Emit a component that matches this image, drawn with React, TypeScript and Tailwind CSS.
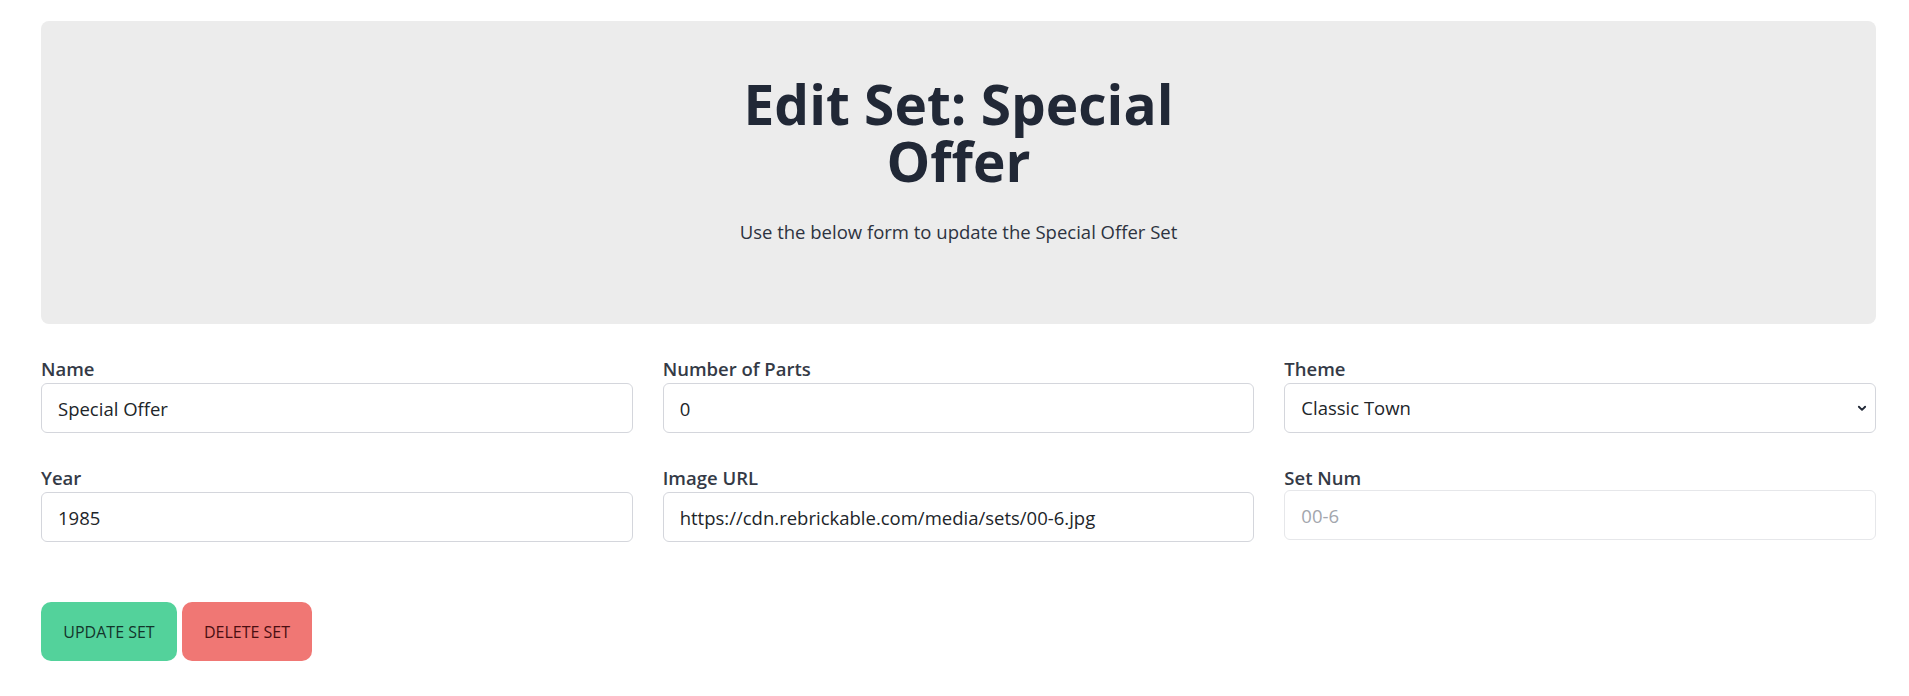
import React, { useState } from 'react';

const font = { fontFamily: '"Open Sans", "Noto Sans", sans-serif' };

interface FieldProps {
  label: string;
  children: React.ReactNode;
}

const Field: React.FC<FieldProps> = ({ label, children }) => (
  <div className="flex flex-col">
    <label className="text-[18.5px] leading-[28px] font-semibold text-[#343a46]">{label}</label>
    {children}
  </div>
);

const inputCls =
  'h-[50px] w-full rounded-md border border-[#d4d6dc] bg-white px-4 text-[18.5px] text-[#212529] outline-none';

export default function App() {
  const [name, setName] = useState('Special Offer');
  const [parts, setParts] = useState('0');
  const [theme, setTheme] = useState('Classic Town');
  const [year, setYear] = useState('1985');
  const [img, setImg] = useState('https://cdn.rebrickable.com/media/sets/00-6.jpg');

  return (
    <div className="min-h-screen bg-white pl-[41px] pr-[33px] pt-[21px]" style={font}>
      {/* header */}
      <div className="flex h-[303px] flex-col items-center rounded-lg bg-[#ececec] pt-[54px]">
        <h1 className="w-[520px] text-center text-[55px] font-bold leading-[57px] text-[#212836]">
          Edit Set: Special Offer
        </h1>
        <p className="mt-[29px] text-[18.5px] leading-[28px] text-[#2d3340]">
          Use the below form to update the Special Offer Set
        </p>
      </div>

      {/* form */}
      <div className="mt-[31px] grid grid-cols-3 gap-x-[30px] gap-y-[31px]">
        <Field label="Name">
          <input className={inputCls} value={name} onChange={e => setName(e.target.value)} />
        </Field>
        <Field label="Number of Parts">
          <input className={inputCls} value={parts} onChange={e => setParts(e.target.value)} />
        </Field>
        <Field label="Theme">
          <div className="relative">
            <select
              className={`${inputCls} appearance-none`}
              value={theme}
              onChange={e => setTheme(e.target.value)}
            >
              <option>Classic Town</option>
              <option>Classic Space</option>
              <option>Castle</option>
            </select>
            <svg
              className="pointer-events-none absolute right-[9px] top-[20px] h-[10px] w-[10px] text-[#212836]"
              viewBox="0 0 16 16"
              fill="none"
              stroke="currentColor"
              strokeWidth="3"
              strokeLinecap="round"
              strokeLinejoin="round"
            >
              <path d="M3 6l5 5 5-5" />
            </svg>
          </div>
        </Field>
        <Field label="Year">
          <input className={inputCls} value={year} onChange={e => setYear(e.target.value)} />
        </Field>
        <Field label="Image URL">
          <input className={inputCls} value={img} onChange={e => setImg(e.target.value)} />
        </Field>
        <Field label="Set Num">
          <input
            className="-mt-[2px] h-[50px] w-full rounded-md border border-[#e6e7ea] bg-white px-4 text-[18.5px] text-[#a3a6ad] outline-none"
            value="00-6"
            readOnly
          />
        </Field>
      </div>

      <div className="mt-[60px] flex gap-[5px]">
        <button className="h-[59px] w-[136px] rounded-[10px] bg-[#53d29b] text-[16px] uppercase text-[#13352b]">
          Update Set
        </button>
        <button className="h-[59px] w-[130px] rounded-[10px] bg-[#f07774] text-[16px] uppercase text-[#4a0e11]">
          Delete Set
        </button>
      </div>
    </div>
  );
}
